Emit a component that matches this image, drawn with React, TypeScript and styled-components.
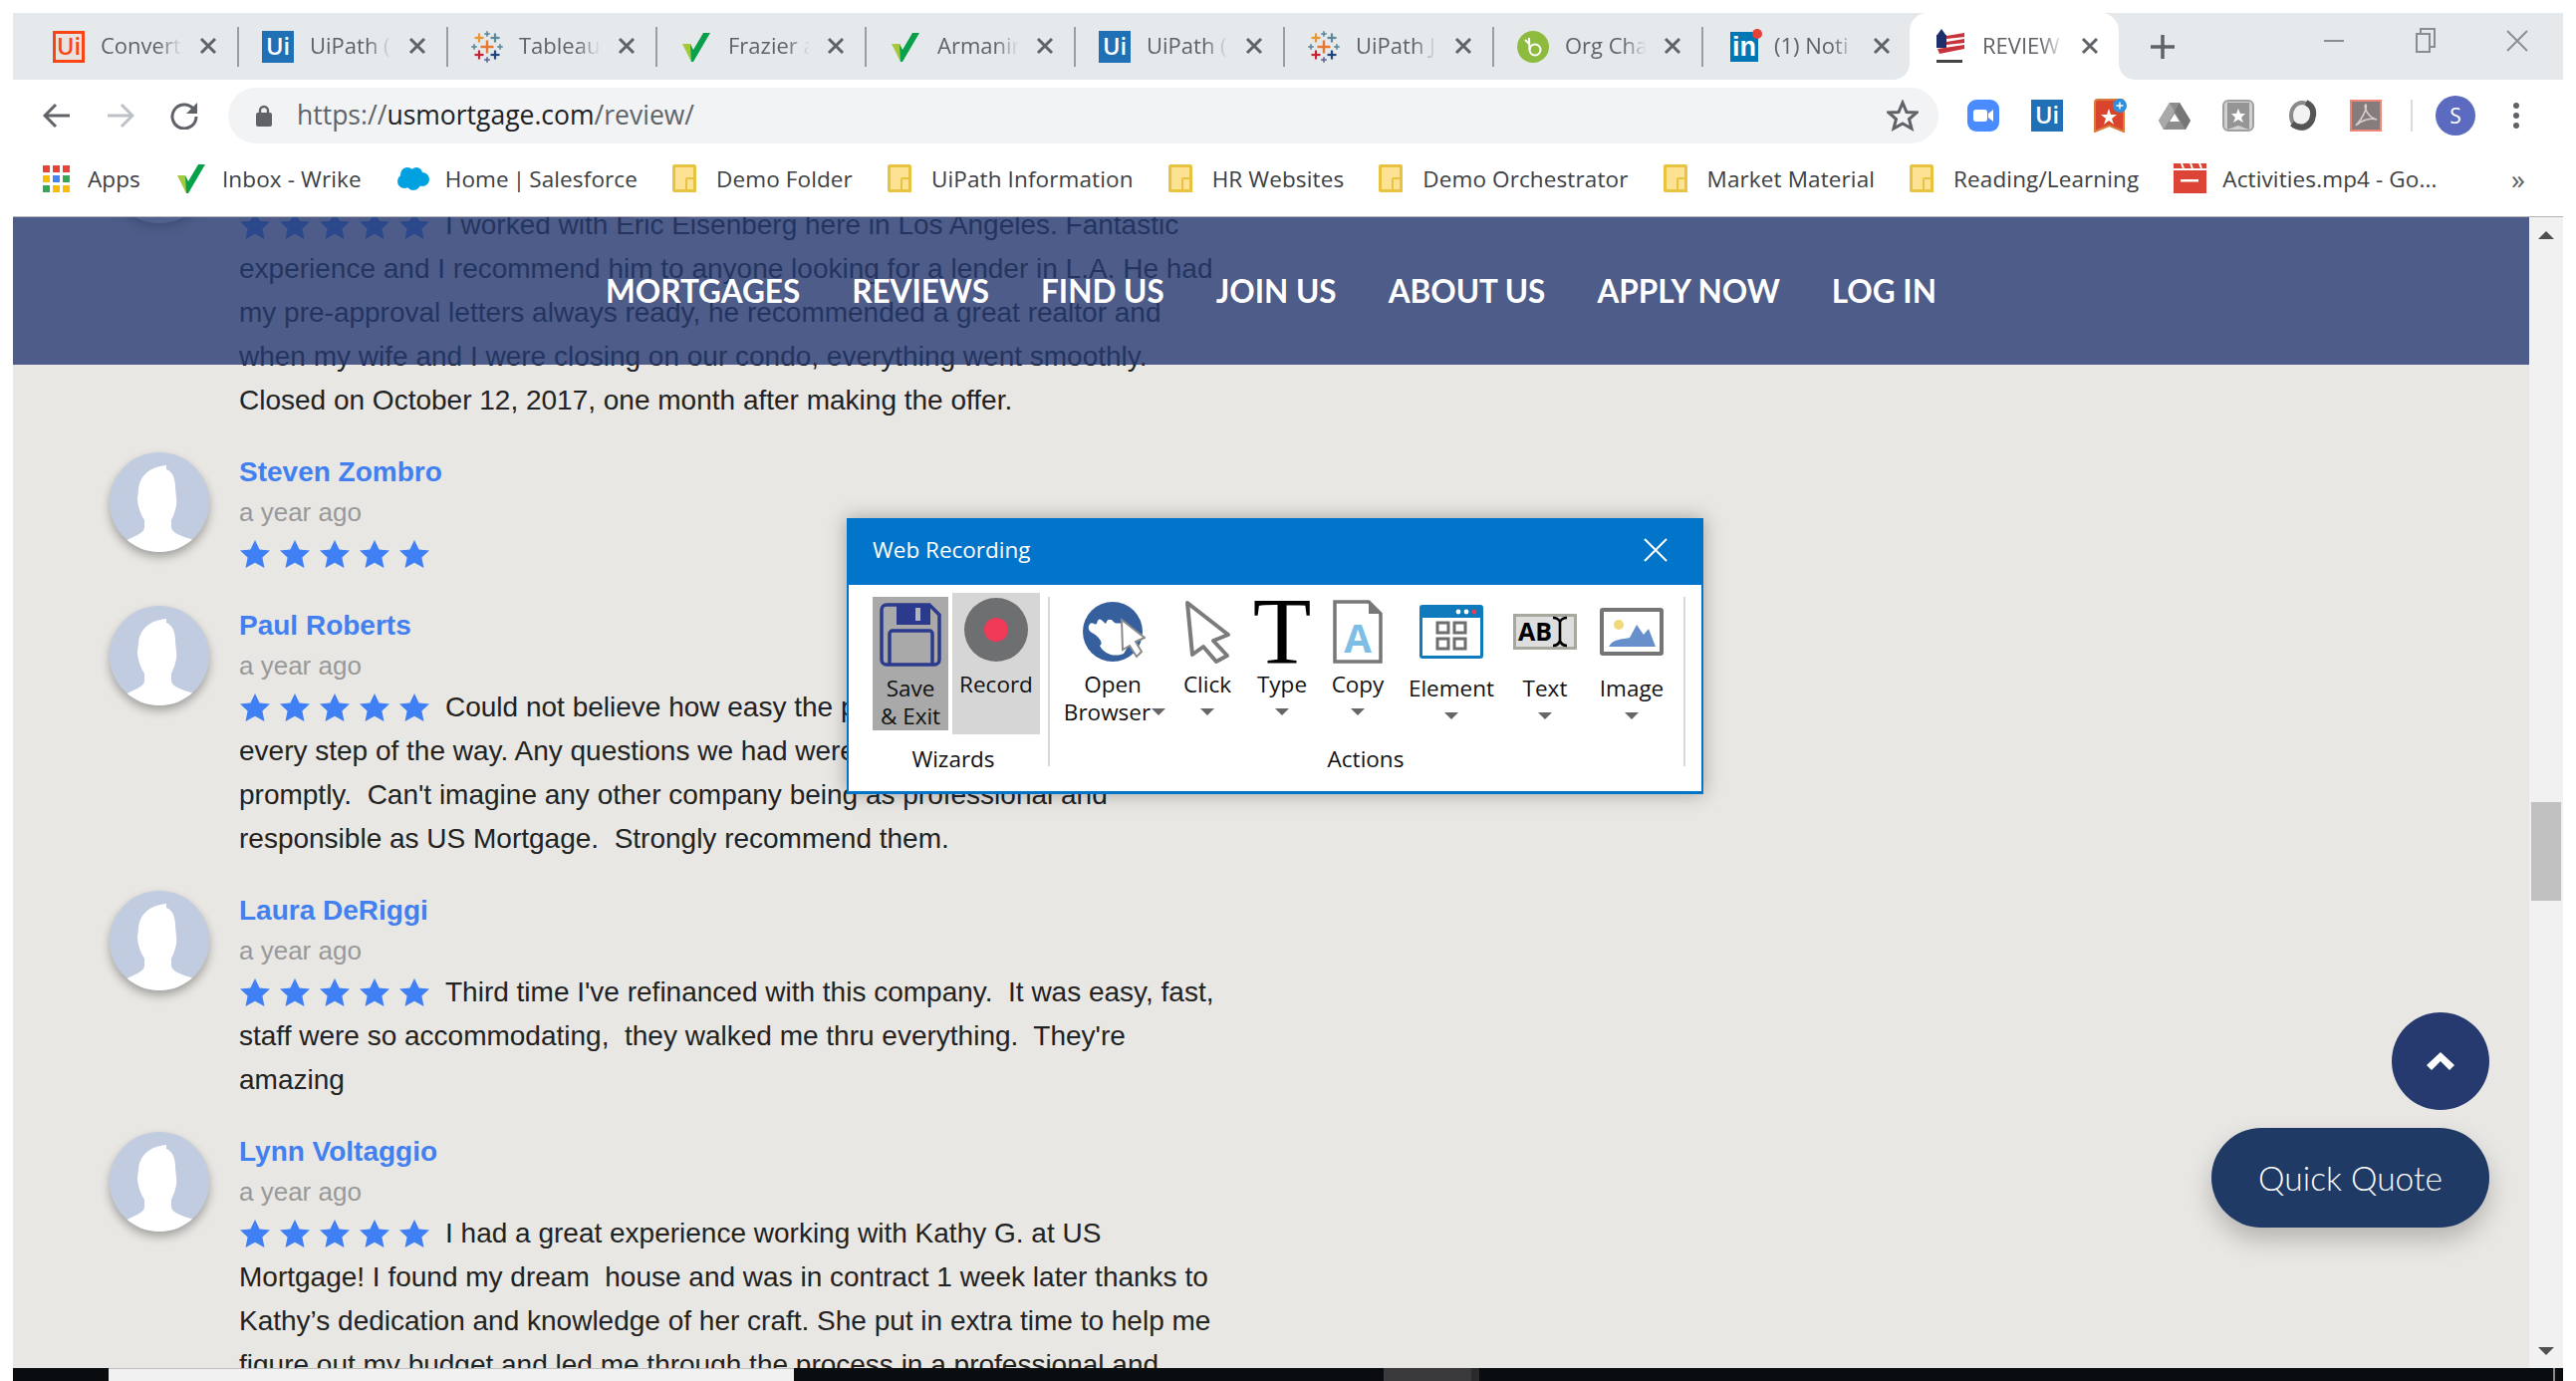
import React from "react";
import styled, {createGlobalStyle} from "styled-components";

const GlobalStyle = createGlobalStyle`
  html, body {
    margin: 0;
    padding: 0;
    width: 2586px;
    height: 1386px;
    overflow: hidden;
    background: #fff;
    font-family: "Open Sans", "Liberation Sans", sans-serif;
  }
  * { box-sizing: border-box; }
`;

const Screen = styled.div`
  width: 2586px;
  height: 1386px;
  padding: 13px 13px 0 13px;
  display: flex;
  flex-direction: column;
  overflow: hidden;
`;

/* ---------- tab strip ---------- */

const TabStrip = styled.div`
  height: 67px;
  flex: none;
  display: flex;
  align-items: stretch;
  padding-left: 17px;
  background: #e6e9ec;
`;

const Tab = styled.div<{$active?: boolean; $sep?: boolean}>`
  position: relative;
  flex: none;
  width: 210px;
  display: flex;
  align-items: center;
  padding-left: ${(p) => (p.$active ? 25 : 23)}px;
  margin-left: ${(p) => (p.$active ? -3 : 0)}px;
  background: ${(p) => (p.$active ? "#fff" : "transparent")};
  border-radius: ${(p) => (p.$active ? "18px 18px 0 0" : "0")};

  ${(p) =>
    p.$sep &&
    `&::after {
      content: "";
      position: absolute;
      right: 0;
      top: 14px;
      width: 2px;
      height: 40px;
      background: #9b9ea1;
    }`}

  ${(p) =>
    p.$active &&
    `&::before {
      content: "";
      position: absolute;
      left: -16px;
      bottom: 0;
      width: 16px;
      height: 16px;
      background: radial-gradient(circle at 0 0, transparent 15.5px, #fff 16px);
    }
    & > i {
      position: absolute;
      right: -16px;
      bottom: 0;
      width: 16px;
      height: 16px;
      background: radial-gradient(circle at 100% 0, transparent 15.5px, #fff 16px);
    }`}
`;

const TabIcon = styled.span`
  flex: none;
  width: 32px;
  height: 32px;
  display: flex;
  align-items: center;
  justify-content: center;
`;

const TabTitle = styled.span`
  flex: none;
  width: 82px;
  margin: -3px 0 0 16px;
  font-size: 22px;
  line-height: 30px;
  color: #5f6368;
  white-space: nowrap;
  overflow: hidden;
  -webkit-mask-image: linear-gradient(to right, #000 58px, transparent 82px);
  mask-image: linear-gradient(to right, #000 58px, transparent 82px);
`;

const TabClose = styled.svg`
  flex: none;
  width: 18px;
  height: 18px;
  margin: -2px 0 0 17px;
`;

const NewTab = styled.svg`
  flex: none;
  width: 24px;
  height: 24px;
  margin: 0 0 0 32px;
  align-self: center;
`;

const WindowControls = styled.div`
  margin-left: auto;
  display: flex;
  align-items: center;
  height: 28px;
  margin-top: 14px;
`;

const WindowButton = styled.span`
  width: 92px;
  display: flex;
  justify-content: center;
`;

const UiBadge = styled.span<{$size: number; $outline?: boolean}>`
  width: ${(p) => p.$size}px;
  height: ${(p) => p.$size}px;
  display: flex;
  align-items: center;
  justify-content: center;
  font-family: "Open Sans", sans-serif;
  font-weight: 600;
  font-size: ${(p) => p.$size * 0.74}px;
  line-height: 1;
  background: ${(p) => (p.$outline ? "#e9e3df" : "#1f70b4")};
  color: ${(p) => (p.$outline ? "#fa4616" : "#fff")};
  border: ${(p) => (p.$outline ? "3px solid #fa4616" : "none")};
`;

const LinkedInBadge = styled.span`
  position: relative;
  width: 28px;
  height: 30px;
  margin-left: 4px;
  display: flex;
  align-items: flex-end;
  justify-content: center;
  padding-bottom: 1px;
  background: #0077b5;
  color: #fff;
  font-family: "Liberation Sans", sans-serif;
  font-weight: 700;
  font-size: 27px;
  line-height: 1;

  &::after {
    content: "";
    position: absolute;
    top: -3px;
    right: -4px;
    width: 10px;
    height: 10px;
    border-radius: 50%;
    background: #e8413a;
  }
`;

/* ---------- toolbar ---------- */

const Toolbar = styled.div`
  height: 70px;
  flex: none;
  display: flex;
  align-items: center;
  padding: 8px 0 6px 12px;
  background: #fff;
`;

const NavButton = styled.span`
  flex: none;
  width: 64px;
  display: flex;
  justify-content: center;
`;

const Omnibox = styled.div`
  flex: none;
  width: 1717px;
  height: 56px;
  margin-left: 12px;
  padding: 0 20px 0 28px;
  display: flex;
  align-items: center;
  border-radius: 28px;
  background: #f1f3f4;
`;

const Url = styled.span`
  margin: -3px 0 0 25px;
  font-size: 26.5px;
  color: #5f6368;
  white-space: nowrap;

  b {
    font-weight: 400;
    color: #202124;
  }
`;

const StarButton = styled.svg`
  margin-left: auto;
  width: 32px;
  height: 32px;
`;

const Extensions = styled.div`
  margin-left: 13px;
  display: flex;
  align-items: center;
`;

const Extension = styled.span`
  flex: none;
  width: 64px;
  display: flex;
  justify-content: center;
`;

const ToolbarDivider = styled.span`
  flex: none;
  width: 2px;
  height: 32px;
  margin-left: 13px;
  background: #d8dadc;
`;

const Profile = styled.span`
  flex: none;
  width: 40px;
  height: 40px;
  margin-left: 23px;
  display: flex;
  align-items: center;
  justify-content: center;
  border-radius: 50%;
  background: #5c6bc0;
  color: #fff;
  font-size: 21px;
`;

const MenuDots = styled.span`
  flex: none;
  margin-left: 38px;
  width: 6px;
  display: flex;
  flex-direction: column;
  gap: 4px;

  i {
    width: 6px;
    height: 6px;
    border-radius: 50%;
    background: #5f6368;
  }
`;

/* ---------- bookmarks ---------- */

const BookmarkBar = styled.div`
  height: 67px;
  flex: none;
  display: flex;
  align-items: center;
  gap: 35px;
  padding: 0 38px 9px 30px;
  background: #fff;
`;

const Bookmark = styled.span<{$gap?: number; $tight?: boolean}>`
  flex: none;
  display: flex;
  align-items: center;
  gap: ${(p) => p.$gap ?? 20}px;
  font-size: 22.5px;
  letter-spacing: 0.12px;
  word-spacing: ${(p) => (p.$tight ? -2 : 0)}px;
  color: #3c4043;
  white-space: nowrap;
`;

const MoreBookmarks = styled.span`
  margin-left: auto;
  font-size: 28px;
  line-height: 1;
  color: #5f6368;
`;

const Folder = styled.span`
  position: relative;
  flex: none;
  width: 24px;
  height: 28px;
  background: #fde293;
  border: 3px solid #e8c33f;
  border-radius: 2px;

  &::after {
    content: "";
    position: absolute;
    right: -3px;
    bottom: -3px;
    width: 7px;
    height: 11px;
    border: 2px solid #e8c33f;
    border-radius: 2px 0 0 0;
  }
`;

const AppsGrid = styled.span`
  flex: none;
  width: 27px;
  height: 27px;
  display: grid;
  grid-template-columns: repeat(3, 1fr);
  grid-template-rows: repeat(3, 1fr);
  gap: 3px;
`;

const AppsCell = styled.i<{$color: string}>`
  background: ${(p) => p.$color};
`;

/* ---------- page ---------- */

const Viewport = styled.div`
  flex: 1;
  min-height: 0;
  display: flex;
  border-top: 1px solid #b4b4b4;
`;

const Page = styled.main`
  position: relative;
  flex: none;
  width: 2526px;
  overflow: hidden;
  background: #e8e7e3;
`;

const ReviewList = styled.div`
  margin-top: -94px;
  padding-left: 97px;
  display: flex;
  flex-direction: column;
  gap: 30px;
`;

const Review = styled.article`
  display: flex;
  gap: 30px;
`;

const Avatar = styled.span`
  flex: none;
  width: 100px;
  height: 100px;
  border-radius: 50%;
  overflow: hidden;
  background: #c2cce0;
  box-shadow: 0 5px 10px rgba(0, 0, 0, 0.3);
`;

const ReviewBody = styled.div`
  width: 1010px;
  font-family: "Liberation Sans", Arial, sans-serif;
`;

const Name = styled.div`
  height: 38px;
  padding-top: 2px;
  font-size: 28px;
  line-height: 36px;
  font-weight: 700;
  color: #4280f0;
`;

const Age = styled.div`
  height: 40px;
  margin: 2px 0 0;
  font-size: 26px;
  line-height: 40px;
  color: #999;
`;

const ReviewText = styled.p`
  margin: 0;
  font-size: 28px;
  line-height: 44px;
  color: #222;
  white-space: pre-wrap;
`;

const Stars = styled.span<{$trailing: boolean}>`
  display: inline-flex;
  gap: 10px;
  margin: 0 ${(p) => (p.$trailing ? 16 : 0)}px 0 1px;
  vertical-align: -5px;
`;

const Header = styled.header`
  position: absolute;
  top: 0;
  left: 0;
  right: 0;
  height: 148px;
  display: flex;
  align-items: center;
  justify-content: center;
  gap: 52px;
  background: rgba(37, 57, 112, 0.8);
`;

const NavLink = styled.a`
  font-family: Lato, sans-serif;
  font-weight: 700;
  font-size: 31.5px;
  color: #fff;
  white-space: nowrap;
`;

const ScrollTop = styled.button`
  position: absolute;
  right: 40px;
  bottom: 259px;
  width: 98px;
  height: 98px;
  padding: 0;
  border: none;
  border-radius: 50%;
  background: #273a70;
  display: flex;
  align-items: center;
  justify-content: center;
`;

const QuickQuote = styled.button`
  position: absolute;
  right: 40px;
  bottom: 141px;
  width: 279px;
  height: 100px;
  padding: 0;
  border: none;
  border-radius: 50px;
  background: #203a66;
  color: #fff;
  font-family: Lato, sans-serif;
  font-size: 33.5px;
  font-weight: 300;
  box-shadow: 0 12px 24px rgba(0, 0, 0, 0.22);
`;

/* ---------- scrollbar ---------- */

const Scrollbar = styled.div`
  flex: none;
  width: 34px;
  display: flex;
  flex-direction: column;
  align-items: center;
  background: #f1f1f1;
`;

const ScrollArrow = styled.i<{$down?: boolean}>`
  flex: none;
  width: 0;
  height: 0;
  border-left: 8px solid transparent;
  border-right: 8px solid transparent;
  border-${(p) => (p.$down ? "top" : "bottom")}: 8px solid #505050;
  margin: ${(p) => (p.$down ? "auto 0 13px" : "14px 0 0")};
`;

const ScrollThumb = styled.i`
  flex: none;
  width: 30px;
  height: 99px;
  margin-top: 565px;
  background: #c1c1c1;
`;

/* ---------- taskbar sliver ---------- */

const Taskbar = styled.div`
  height: 13px;
  flex: none;
  display: flex;
  background: #0a0d10;
`;

const TaskSegment = styled.i<{$width: number; $color: string; $edge?: boolean}>`
  flex: none;
  width: ${(p) => p.$width}px;
  background: ${(p) => p.$color};
  border-top: ${(p) => (p.$edge ? "1px solid #bdbdbd" : "none")};
`;

/* ---------- recorder dialog ---------- */

const Dialog = styled.section`
  position: absolute;
  left: 837px;
  top: 302px;
  width: 860px;
  height: 277px;
  border: 2px solid #0274c9;
  border-bottom-width: 3px;
  background: #fff;
  color: #111;
  box-shadow: 0 0 18px rgba(0, 0, 0, 0.3);
  font-family: "Open Sans", sans-serif;
`;

const DialogTitle = styled.div`
  height: 66px;
  margin-top: -1px;
  padding: 0 34px 5px 24px;
  display: flex;
  align-items: center;
  justify-content: space-between;
  background: #0274c9;
  color: #fff;
  font-size: 22.5px;
`;

const DialogBody = styled.div`
  display: flex;
  padding: 8px 0 0 24px;
`;

const RibbonGroup = styled.div<{$indent?: boolean}>`
  flex: none;
  display: flex;
  flex-direction: column;
  margin-left: ${(p) => (p.$indent ? 8 : 0)}px;
`;

const RibbonRow = styled.div`
  height: 142px;
  display: flex;
  align-items: center;
  gap: 4px;
`;

const ActionRow = styled.div`
  height: 142px;
  display: flex;
  align-items: flex-start;
`;

const GroupLabel = styled.div<{$shift?: number}>`
  height: 30px;
  margin-top: 10px;
  padding-right: ${(p) => p.$shift ?? 0}px;
  text-align: center;
  font-size: 22.5px;
  line-height: 30px;
`;

const RibbonDivider = styled.i<{$left: number}>`
  flex: none;
  width: 2px;
  height: 170px;
  margin: 4px 0 0 ${(p) => p.$left}px;
  background: #d8d8d8;
`;

const WizardButton = styled.div<{$primary?: boolean}>`
  flex: none;
  width: ${(p) => (p.$primary ? 88 : 76)}px;
  height: ${(p) => (p.$primary ? 142 : 134)}px;
  padding-top: ${(p) => (p.$primary ? 5 : 6)}px;
  display: flex;
  flex-direction: column;
  align-items: center;
  background: ${(p) => (p.$primary ? "#d6d6d6" : "#a9a9a9")};
`;

const ActionButton = styled.div<{$width: number}>`
  flex: none;
  width: ${(p) => p.$width}px;
  padding-top: 4px;
  display: flex;
  flex-direction: column;
  align-items: center;
`;

const IconBox = styled.div`
  height: 70px;
  display: flex;
  align-items: center;
  justify-content: center;
`;

const ButtonLabel = styled.div<{$gap: number}>`
  margin-top: ${(p) => p.$gap}px;
  text-align: center;
  font-size: 22.5px;
  line-height: 27.5px;
  white-space: nowrap;
`;

const Caret = styled.i<{$inline?: boolean}>`
  display: ${(p) => (p.$inline ? "inline-block" : "block")};
  width: 0;
  height: 0;
  margin: ${(p) => (p.$inline ? "0 -4px 3px 1px" : "10px 0 0")};
  vertical-align: middle;
  border-left: 7px solid transparent;
  border-right: 7px solid transparent;
  border-top: 7px solid #666;
`;

const TypeGlyph = styled.span`
  font-family: "Liberation Serif", "Times New Roman", serif;
  font-size: 96px;
  line-height: 70px;
  color: #000;
`;

/* ---------- drawings ---------- */

const Check = ({size = 32}: {size?: number}) => (
  <svg width={size} height={size} viewBox="0 0 32 32" style={{flex: "none"}}>
    <polygon points="2,13 10,13 14,23 11,31" fill="#a4c93a" />
    <polygon points="10,13 13,19 23,2 30,2 13,31 11,31" fill="#08a04b" />
  </svg>
);

const TableauMark = ({size = 32}: {size?: number}) => {
  const cross = (x: number, y: number, r: number, w: number, c: string) => (
    <g key={`${x}-${y}`} stroke={c} strokeWidth={w}>
      <line x1={x - r} y1={y} x2={x + r} y2={y} />
      <line x1={x} y1={y - r} x2={x} y2={y + r} />
    </g>
  );
  return (
    <svg width={size} height={size} viewBox="0 0 32 32">
      {cross(16, 16, 6.5, 2.4, "#e8762d")}
      {cross(8, 7, 4.5, 2.2, "#e8962d")}
      {cross(24, 7, 4.5, 2.2, "#5b879b")}
      {cross(8, 24, 4.5, 2.2, "#c72037")}
      {cross(24, 24, 4.5, 2.2, "#1f447e")}
      {cross(16, 3, 2.8, 1.6, "#5b879b")}
      {cross(16, 29, 2.8, 1.6, "#5c6692")}
      {cross(3, 16, 2.8, 1.6, "#5b879b")}
      {cross(29, 16, 2.8, 1.6, "#5b879b")}
    </svg>
  );
};

const OrgMark = () => (
  <svg width="32" height="32" viewBox="0 0 32 32">
    <circle cx="16" cy="16" r="16" fill="#8dbb3e" />
    <circle cx="18" cy="19" r="5.5" fill="none" stroke="#fff" strokeWidth="2" />
    <path d="M12 7 L12.5 19" stroke="#fff" strokeWidth="2" fill="none" />
    <path d="M8 9 L12 13" stroke="#fff" strokeWidth="2" fill="none" />
  </svg>
);

const FlagMark = () => (
  <svg width="30" height="36" viewBox="0 0 30 36">
    <rect x="1" y="6" width="10" height="13" fill="#1f2f6b" />
    <polygon points="6,0 11,7 1,7" fill="#1f2f6b" />
    <path d="M11 7 L29 4 V8 L11 10 Z M11 13 L29 10 V14 L11 16Z M2 20 L29 16 V20 L4 25Z" fill="#c8323a" />
    <rect x="1" y="31" width="26" height="3" fill="#444" />
  </svg>
);

const CloseGlyph = () => (
  <TabClose viewBox="0 0 18 18">
    <path d="M2 2 L16 16 M16 2 L2 16" stroke="#5f6368" strokeWidth="3" />
  </TabClose>
);

const BackArrow = ({color}: {color: string}) => (
  <svg width="28" height="26" viewBox="0 0 28 26">
    <path d="M2 13 H27 M13 2 L2 13 L13 24" fill="none" stroke={color} strokeWidth="3" />
  </svg>
);

const ForwardArrow = ({color}: {color: string}) => (
  <svg width="28" height="26" viewBox="0 0 28 26">
    <path d="M1 13 H26 M15 2 L26 13 L15 24" fill="none" stroke={color} strokeWidth="3" />
  </svg>
);

const Reload = () => (
  <svg width="28" height="28" viewBox="0 0 28 28">
    <path d="M23 7 A12 12 0 1 0 26 15" fill="none" stroke="#5f6368" strokeWidth="3" />
    <polygon points="27,1 27,12 16,12" fill="#5f6368" />
  </svg>
);

const LockIcon = () => (
  <svg width="16" height="22" viewBox="0 0 16 22" style={{flex: "none"}}>
    <path d="M4 9 V6 a4 4 0 0 1 8 0 V9" fill="none" stroke="#5f6368" strokeWidth="2.4" />
    <rect x="0" y="8" width="16" height="14" rx="2" fill="#5f6368" />
  </svg>
);

const ZoomExt = () => (
  <svg width="32" height="32" viewBox="0 0 32 32">
    <rect width="32" height="32" rx="9" fill="#4a8cff" />
    <rect x="6" y="10" width="14" height="12" rx="2.5" fill="#fff" />
    <polygon points="21,14 26,10 26,22 21,18" fill="#fff" />
  </svg>
);

const WunderExt = () => (
  <svg width="34" height="34" viewBox="0 0 34 34">
    <path d="M1 4 a3 3 0 0 1 3-3 H27 a3 3 0 0 1 3 3 V33 L15.5 27 L1 33 Z" fill="#d9452c" stroke="#d97a3a" strokeWidth="2" />
    <polygon points="15,10 17,16 23,16 18,20 20,26 15,22 10,26 12,20 7,16 13,16" fill="#fff" />
    <circle cx="26" cy="7" r="7" fill="#2f8fdb" />
    <path d="M26 3.5 V10.5 M22.5 7 H29.5" stroke="#fff" strokeWidth="1.4" />
  </svg>
);

const DriveExt = () => (
  <svg width="32" height="28" viewBox="0 0 32 28">
    <polygon points="11,1 21,1 32,19 27,28 5,28 0,19" fill="#8d8d8d" />
    <polygon points="11,1 0,19 5,28 16,10" fill="#a9a9a9" />
    <polygon points="21,1 32,19 27,28 16,10" fill="#767676" />
    <polygon points="16,12 21,20 11,20" fill="#fff" />
  </svg>
);

const BookmarkExt = () => (
  <svg width="32" height="32" viewBox="0 0 32 32">
    <rect x="1" y="1" width="30" height="30" rx="5" fill="#d0d0d0" stroke="#a0a0a0" strokeWidth="2" />
    <path d="M5 3 H27 V30 L16 26 L5 30 Z" fill="#959595" />
    <polygon points="16,9 18,14 23,14 19,18 21,23 16,20 11,23 13,18 9,14 14,14" fill="#fff" />
  </svg>
);

const RingExt = () => (
  <svg width="30" height="34" viewBox="0 0 30 34">
    <ellipse cx="15" cy="17" rx="11" ry="13" fill="#f2f2f2" stroke="#8a8a8a" strokeWidth="4" />
    <path d="M5 25 C12 31 24 30 26 17 C27 10 24 6 19 4" fill="none" stroke="#555" strokeWidth="6" />
  </svg>
);

const PdfExt = () => (
  <svg width="32" height="32" viewBox="0 0 32 32">
    <rect x="1" y="1" width="30" height="30" fill="#877c7c" stroke="#f08678" strokeWidth="2" />
    <path d="M6 26 C12 20 18 8 16 5 C13 6 18 18 27 20 C22 18 12 20 6 26 Z" fill="none" stroke="#d7cfcf" strokeWidth="1.6" />
  </svg>
);

const SalesforceCloud = () => (
  <svg width="33" height="24" viewBox="0 0 33 24" style={{flex: "none"}}>
    <g fill="#00a1e0">
      <circle cx="11" cy="8" r="7" />
      <circle cx="20" cy="7" r="6" />
      <circle cx="26" cy="13" r="7" />
      <circle cx="8" cy="15" r="7" />
      <circle cx="17" cy="17" r="7" />
    </g>
  </svg>
);

const ClapperIcon = () => (
  <svg width="33" height="30" viewBox="0 0 33 30" style={{flex: "none"}}>
    <rect y="7" width="33" height="23" fill="#db4437" />
    <path d="M0 0 H33 V5 H0 Z" fill="#db4437" />
    <path d="M8 0 L10 5 M17 0 L19 5 M26 0 L28 5" stroke="#fff" strokeWidth="2" />
    <rect x="7" y="16" width="18" height="2.5" fill="#fff" />
  </svg>
);

const StarIcon = () => (
  <svg width="30" height="28" viewBox="0 0 30 28" style={{display: "block"}}>
    <polygon points="15,0 19.6,9.6 30,10.5 22.4,17.6 24.5,28 15,22.8 5.5,28 7.6,17.6 0,10.5 10.4,9.6" fill="#4080f5" />
  </svg>
);

const Silhouette = () => (
  <svg width="100" height="100" viewBox="0 0 100 100" style={{display: "block"}}>
    <path
      d="M57 13 C44 14 30 21 29 38 L28 46 C28 53 31 62 35 68 L35 76 C34 81 26 84 13 90 L13 100 L88 100 L85 88 C72 84 62 81 62 75 L62 68 C66 60 68 52 67 46 L66 36 C66 26 63 19 57 17 Z"
      fill="#fff"
    />
  </svg>
);

const SaveIcon = () => (
  <svg width="62" height="64" viewBox="0 0 62 64">
    <path d="M2 7 a5 5 0 0 1 5-5 H50 L60 12 V57 a5 5 0 0 1 -5 5 H7 a5 5 0 0 1 -5-5 Z" fill="none" stroke="#2b3a8c" strokeWidth="3.5" />
    <rect x="17" y="2" width="34" height="20" fill="#2b3a8c" />
    <rect x="36" y="5" width="5" height="13" fill="#b4b4b4" />
    <path d="M10 62 V31 a3 3 0 0 1 3-3 H50 a3 3 0 0 1 3 3 V62" fill="none" stroke="#2b3a8c" strokeWidth="3.5" />
  </svg>
);

const RecordIcon = () => (
  <svg width="64" height="64" viewBox="0 0 64 64">
    <circle cx="32" cy="32" r="32" fill="#6e6f71" />
    <circle cx="32" cy="32" r="12" fill="#f03a58" />
  </svg>
);

const GlobeIcon = () => (
  <svg width="66" height="64" viewBox="-2 0 66 64">
    <circle cx="31" cy="32" r="30" fill="#365f9e" />
    <path d="M7 26 C10 20 12 26 15 24 C17 15 21 22 24 24 C26 18 28 20 30 20 C34 26 38 22 42 24 L48 44 L42 54 C32 58 22 54 18 46 C22 44 18 38 12 34 C8 32 6 30 7 26 Z" fill="#fff" />
    <polygon points="40,20 63,38 54,42 60,52 55,57 48,46 41,50" fill="#fff" stroke="#8a8a8a" strokeWidth="2" />
  </svg>
);

const CursorIcon = () => (
  <svg width="48" height="66" viewBox="0 0 48 66">
    <polygon points="4,4 45,36 30,42 44,57 33,63 20,48 9,56" fill="#fff" stroke="#7b7b7b" strokeWidth="4" strokeLinejoin="round" />
  </svg>
);

const CopyIcon = () => (
  <svg width="50" height="64" viewBox="0 0 50 64">
    <path d="M2 2 H36 L48 14 V62 H2 Z" fill="#fff" stroke="#777" strokeWidth="3.5" />
    <polygon points="36,1 49,14 36,14" fill="#777" />
    <text x="25" y="53" textAnchor="middle" fontFamily="Open Sans, sans-serif" fontWeight="700" fontSize="40" fill="#7dbde6">A</text>
  </svg>
);

const ElementIcon = () => (
  <svg width="64" height="54" viewBox="0 0 64 54">
    <rect width="64" height="54" rx="3" fill="#0f7bbd" />
    <rect x="3" y="13" width="58" height="38" fill="#fff" />
    <circle cx="39" cy="7" r="2.4" fill="#fff" />
    <circle cx="47" cy="7" r="2.4" fill="#fff" />
    <circle cx="55" cy="7" r="2.4" fill="#f03a58" />
    <g fill="none" stroke="#6e6e6e" strokeWidth="3">
      <rect x="18" y="18" width="11" height="10" />
      <rect x="35" y="18" width="11" height="10" />
      <rect x="18" y="34" width="11" height="10" />
      <rect x="35" y="34" width="11" height="10" />
    </g>
  </svg>
);

const TextIcon = () => (
  <svg width="64" height="36" viewBox="0 0 64 36">
    <rect x="1.5" y="1.5" width="61" height="33" fill="#dedede" stroke="#a8a89f" strokeWidth="3" />
    <text x="5" y="27" fontFamily="Open Sans, sans-serif" fontWeight="700" fontSize="25" fill="#000">AB</text>
    <path d="M40 4 C44 4 46 6 47 8 C48 6 50 4 54 4 M47 8 V27 M40 32 C44 32 46 30 47 27 C48 30 50 32 54 32" fill="none" stroke="#000" strokeWidth="2.6" />
  </svg>
);

const ImageIcon = () => (
  <svg width="64" height="48" viewBox="0 0 64 48">
    <rect x="2" y="2" width="60" height="44" rx="1" fill="#fff" stroke="#757575" strokeWidth="4" />
    <circle cx="19" cy="17" r="5" fill="#efd97c" />
    <path d="M9 39 C14 30 24 32 30 30 L37 17 L44 27 L49 21 L56 39 Z" fill="#678fcc" />
  </svg>
);

/* ---------- data ---------- */

const tabs = [
  {title: "Convert", icon: <UiBadge $size={32} $outline>Ui</UiBadge>},
  {title: "UiPath (", icon: <UiBadge $size={32}>Ui</UiBadge>},
  {title: "Tableau", icon: <TableauMark />},
  {title: "Frazier a", icon: <Check />},
  {title: "Armanir", icon: <Check />},
  {title: "UiPath (", icon: <UiBadge $size={32}>Ui</UiBadge>},
  {title: "UiPath J", icon: <TableauMark />},
  {title: "Org Cha", icon: <OrgMark />},
  {title: "(1) Noti", icon: <LinkedInBadge>in</LinkedInBadge>},
];

const appColors = ["#ea4335", "#ea4335", "#ea4335", "#fbbc05", "#4285f4", "#34a853", "#34a853", "#fbbc05", "#fbbc05"];

const folders = ["Demo Folder", "UiPath Information", "HR Websites", "Demo Orchestrator", "Market Material", "Reading/Learning"];

const navItems = ["MORTGAGES", "REVIEWS", "FIND US", "JOIN US", "ABOUT US", "APPLY NOW", "LOG IN"];

const reviews = [
  {
    name: "",
    lines: [
      "I worked with Eric Eisenberg here in Los Angeles. Fantastic",
      "experience and I recommend him to anyone looking for a lender in L.A. He had",
      "my pre-approval letters always ready, he recommended a great realtor and",
      "when my wife and I were closing on our condo, everything went smoothly.",
      "Closed on October 12, 2017, one month after making the offer.",
    ],
  },
  {name: "Steven Zombro", lines: [""]},
  {
    name: "Paul Roberts",
    lines: [
      "Could not believe how easy the p",
      "every step of the way. Any questions we had were",
      "promptly.  Can't imagine any other company being as professional and",
      "responsible as US Mortgage.  Strongly recommend them.",
    ],
  },
  {
    name: "Laura DeRiggi",
    lines: [
      "Third time I've refinanced with this company.  It was easy, fast,",
      "staff were so accommodating,  they walked me thru everything.  They're",
      "amazing",
    ],
  },
  {
    name: "Lynn Voltaggio",
    lines: [
      "I had a great experience working with Kathy G. at US",
      "Mortgage! I found my dream  house and was in contract 1 week later thanks to",
      "Kathy’s dedication and knowledge of her craft. She put in extra time to help me",
      "figure out my budget and led me through the process in a professional and",
    ],
  },
];

const actions = [
  {label: "Click", width: 80, gap: 4, icon: <CursorIcon />},
  {label: "Type", width: 70, gap: 4, icon: <TypeGlyph>T</TypeGlyph>},
  {label: "Copy", width: 82, gap: 4, icon: <CopyIcon />},
  {label: "Element", width: 106, gap: 8, icon: <ElementIcon />},
  {label: "Text", width: 82, gap: 8, icon: <TextIcon />},
  {label: "Image", width: 92, gap: 8, icon: <ImageIcon />},
];

export default function App() {
  return (
    <Screen>
      <GlobalStyle />

      <TabStrip>
        {tabs.map((tab, i) => (
          <Tab key={i} $sep={i < tabs.length - 1}>
            <TabIcon>{tab.icon}</TabIcon>
            <TabTitle>{tab.title}</TabTitle>
            <CloseGlyph />
          </Tab>
        ))}
        <Tab $active>
          <TabIcon>
            <FlagMark />
          </TabIcon>
          <TabTitle>REVIEW</TabTitle>
          <CloseGlyph />
          <i />
        </Tab>
        <NewTab viewBox="0 0 24 24">
          <path d="M12 0 V24 M0 12 H24" stroke="#5f6368" strokeWidth="3.5" />
        </NewTab>
        <WindowControls>
          <WindowButton>
            <svg width="20" height="4" viewBox="0 0 20 4">
              <rect y="1" width="20" height="2" fill="#8a8d90" />
            </svg>
          </WindowButton>
          <WindowButton>
            <svg width="20" height="26" viewBox="0 0 20 26">
              <rect x="1" y="6" width="13" height="18" fill="none" stroke="#8a8d90" strokeWidth="2" />
              <path d="M5 6 V1 H19 V19 H14" fill="none" stroke="#8a8d90" strokeWidth="2" />
            </svg>
          </WindowButton>
          <WindowButton>
            <svg width="22" height="22" viewBox="0 0 22 22">
              <path d="M1 1 L21 21 M21 1 L1 21" stroke="#8a8d90" strokeWidth="1.8" />
            </svg>
          </WindowButton>
        </WindowControls>
      </TabStrip>

      <Toolbar>
        <NavButton>
          <BackArrow color="#5f6368" />
        </NavButton>
        <NavButton>
          <ForwardArrow color="#bdc1c6" />
        </NavButton>
        <NavButton>
          <Reload />
        </NavButton>
        <Omnibox>
          <LockIcon />
          <Url>
            https://<b>usmortgage.com</b>/review/
          </Url>
          <StarButton viewBox="0 0 32 32">
            <polygon
              points="16,3 20,12.5 30,13 22.5,19.5 25,29 16,24 7,29 9.5,19.5 2,13 12,12.5"
              fill="none"
              stroke="#5f6368"
              strokeWidth="3"
            />
          </StarButton>
        </Omnibox>
        <Extensions>
          <Extension>
            <ZoomExt />
          </Extension>
          <Extension>
            <UiBadge $size={32}>Ui</UiBadge>
          </Extension>
          <Extension>
            <WunderExt />
          </Extension>
          <Extension>
            <DriveExt />
          </Extension>
          <Extension>
            <BookmarkExt />
          </Extension>
          <Extension>
            <RingExt />
          </Extension>
          <Extension>
            <PdfExt />
          </Extension>
        </Extensions>
        <ToolbarDivider />
        <Profile>S</Profile>
        <MenuDots>
          <i />
          <i />
          <i />
        </MenuDots>
      </Toolbar>

      <BookmarkBar>
        <Bookmark $gap={18}>
          <AppsGrid>
            {appColors.map((c, i) => (
              <AppsCell key={i} $color={c} />
            ))}
          </AppsGrid>
          Apps
        </Bookmark>
        <Bookmark $gap={15}>
          <Check />
          Inbox - Wrike
        </Bookmark>
        <Bookmark $gap={16} $tight>
          <SalesforceCloud />
          Home | Salesforce
        </Bookmark>
        {folders.map((f) => (
          <Bookmark key={f}>
            <Folder />
            {f}
          </Bookmark>
        ))}
        <Bookmark $gap={16}>
          <ClapperIcon />
          Activities.mp4 - Go...
        </Bookmark>
        <MoreBookmarks>»</MoreBookmarks>
      </BookmarkBar>

      <Viewport>
        <Page>
          <ReviewList>
            {reviews.map((r, i) => (
              <Review key={i}>
                <Avatar>
                  <Silhouette />
                </Avatar>
                <ReviewBody>
                  <Name>{r.name || "\u00a0"}</Name>
                  <Age>a year ago</Age>
                  <ReviewText>
                    <Stars $trailing={r.lines[0] !== ""}>
                      {[0, 1, 2, 3, 4].map((s) => (
                        <StarIcon key={s} />
                      ))}
                    </Stars>
                    {r.lines.map((line, n) => (
                      <React.Fragment key={n}>
                        {n > 0 && <br />}
                        {line}
                      </React.Fragment>
                    ))}
                  </ReviewText>
                </ReviewBody>
              </Review>
            ))}
          </ReviewList>

          <Header>
            {navItems.map((item) => (
              <NavLink key={item}>{item}</NavLink>
            ))}
          </Header>

          <ScrollTop>
            <svg width="28" height="18" viewBox="0 0 28 18">
              <path d="M14 0 L28 13 L23 18 L14 9 L5 18 L0 13 Z" fill="#fff" />
            </svg>
          </ScrollTop>
          <QuickQuote>Quick Quote</QuickQuote>

          <Dialog>
            <DialogTitle>
              Web Recording
              <svg width="24" height="24" viewBox="0 0 24 24">
                <path d="M1 1 L23 23 M23 1 L1 23" stroke="#fff" strokeWidth="2" />
              </svg>
            </DialogTitle>
            <DialogBody>
              <RibbonGroup>
                <RibbonRow>
                  <WizardButton>
                    <SaveIcon />
                    <ButtonLabel $gap={8}>
                      Save
                      <br />& Exit
                    </ButtonLabel>
                  </WizardButton>
                  <WizardButton $primary>
                    <RecordIcon />
                    <ButtonLabel $gap={9}>Record</ButtonLabel>
                  </WizardButton>
                </RibbonRow>
                <GroupLabel $shift={6}>Wizards</GroupLabel>
              </RibbonGroup>
              <RibbonDivider $left={8} />
              <RibbonGroup $indent>
                <ActionRow>
                  <ActionButton $width={110}>
                    <IconBox>
                      <GlobeIcon />
                    </IconBox>
                    <ButtonLabel $gap={4}>
                      Open
                      <br />
                      Browser
                      <Caret $inline />
                    </ButtonLabel>
                  </ActionButton>
                  {actions.map((a) => (
                    <ActionButton key={a.label} $width={a.width}>
                      <IconBox>{a.icon}</IconBox>
                      <ButtonLabel $gap={a.gap}>{a.label}</ButtonLabel>
                      <Caret />
                    </ActionButton>
                  ))}
                </ActionRow>
                <GroupLabel $shift={4}>Actions</GroupLabel>
              </RibbonGroup>
              <RibbonDivider $left={6} />
            </DialogBody>
          </Dialog>
        </Page>
        <Scrollbar>
          <ScrollArrow />
          <ScrollThumb />
          <ScrollArrow $down />
        </Scrollbar>
      </Viewport>

      <Taskbar>
        <TaskSegment $width={96} $color="#0a0d10" />
        <TaskSegment $width={688} $color="#f1f1f1" $edge />
        <TaskSegment $width={592} $color="#0a0d10" />
        <TaskSegment $width={88} $color="#3a3a3c" />
        <TaskSegment $width={8} $color="#2a2a2c" />
        <TaskSegment $width={1078} $color="#0a0d10" />
        <TaskSegment $width={2} $color="#8a8a8a" />
      </Taskbar>
    </Screen>
  );
}
